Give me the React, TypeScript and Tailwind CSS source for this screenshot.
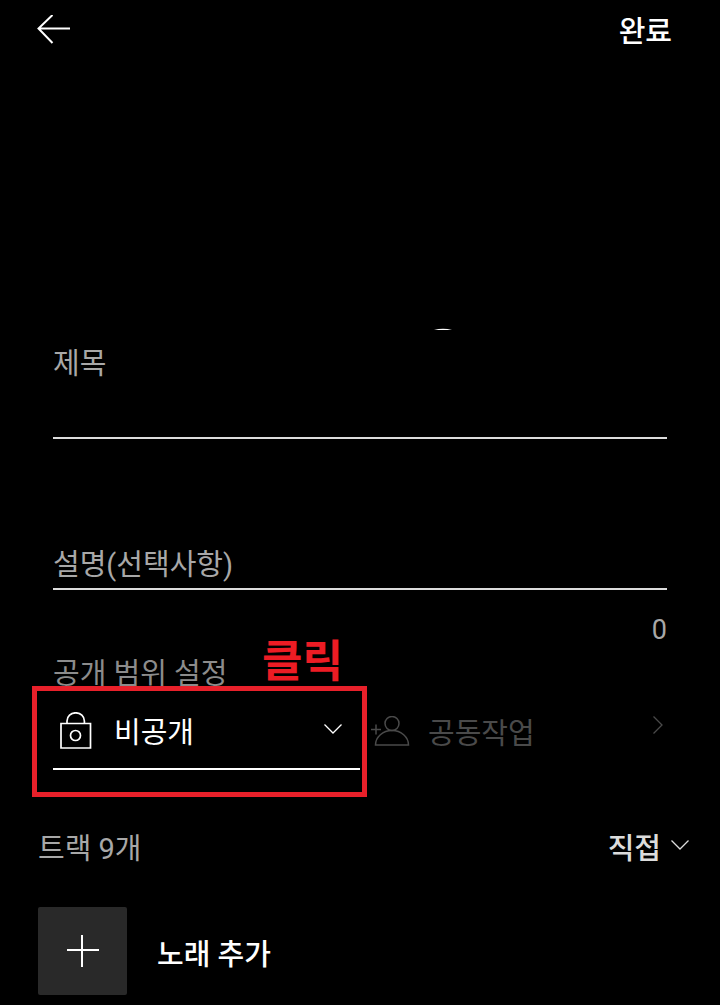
import React, { useState } from "react";

interface IconProps {
  className?: string;
}

const ArrowLeftIcon: React.FC<IconProps> = ({ className }) => (
  <svg width="34" height="30" viewBox="0 0 34 30" fill="none" stroke="currentColor" strokeWidth="2" className={className} aria-hidden="true">
    <path d="M34 13.5H2.5M16.5 0l-14 13.5 14 14.5" />
  </svg>
);

const ChevronDownIcon: React.FC<IconProps> = ({ className }) => (
  <svg width="18" height="10" viewBox="0 0 18 10" fill="none" stroke="currentColor" strokeWidth="1.3" className={className} aria-hidden="true">
    <path d="M.5.5 9 9 17.5.5" />
  </svg>
);

const ChevronRightIcon: React.FC<IconProps> = ({ className }) => (
  <svg width="10" height="18" viewBox="0 0 10 18" fill="none" stroke="currentColor" strokeWidth="1.3" className={className} aria-hidden="true">
    <path d="M.5.5 9 9 .5 17.5" />
  </svg>
);

const LockIcon: React.FC<IconProps> = ({ className }) => (
  <svg width="32" height="38" viewBox="0 0 32 38" fill="none" stroke="currentColor" strokeWidth="1.7" className={className} aria-hidden="true">
    <path d="M1 11.5h29.5V36H1zM7 11.5V9a8.7 8.2 0 0 1 17.4 0v2.5" />
    <circle cx="15.5" cy="23.5" r="5" />
  </svg>
);

const AddPersonIcon: React.FC<IconProps> = ({ className }) => (
  <svg width="39" height="32" viewBox="0 0 39 32" fill="none" stroke="currentColor" strokeWidth="1.5" className={className} aria-hidden="true">
    <circle cx="21" cy="7.5" r="7" />
    <path d="M4.5 29a16.5 14.5 0 0 1 33 0zM0 13.5h10M5 8.5v10" />
  </svg>
);

const PlusIcon: React.FC<IconProps> = ({ className }) => (
  <svg width="32" height="32" viewBox="0 0 32 32" fill="none" stroke="currentColor" strokeWidth="2" className={className} aria-hidden="true">
    <path d="M0 15h32M15 0v32" />
  </svg>
);

export default function App() {
  const [title, setTitle] = useState("");
  const [description, setDescription] = useState("");
  const [privacy, setPrivacy] = useState("private");

  return (
    <div className="min-h-screen bg-black pb-[10px] font-[family-name:Roboto,'Noto_Sans_CJK_KR',sans-serif] text-[29px] leading-10 text-white">
      <header className="flex h-15 items-center justify-between pr-12 pl-9">
        <button type="button" aria-label="뒤로" className="cursor-pointer">
          <ArrowLeftIcon />
        </button>
        <button type="button" className="cursor-pointer pt-1 font-medium">
          완료
        </button>
      </header>

      {/* Playlist artwork */}
      <div className="flex h-[270px] items-end pl-[434px]">
        <svg width="18" height="2" viewBox="0 0 18 2" fill="white" aria-hidden="true">
          <path d="M0 2Q9-.6 18 2z" />
        </svg>
      </div>

      <main>
        <div className="px-[53px]">
          <div className="pt-[14px]">
            <label htmlFor="title" className="block text-[#a8a8a8]">
              제목
            </label>
            <input
              id="title"
              type="text"
              value={title}
              onChange={(e) => setTitle(e.target.value)}
              className="block h-[55px] w-full border-b-2 border-[#dcdcdc] bg-transparent outline-none"
            />
          </div>

          <input
            type="text"
            aria-label="설명(선택사항)"
            placeholder="설명(선택사항)"
            value={description}
            onChange={(e) => setDescription(e.target.value)}
            className="mt-[99px] block h-13 w-full border-b-2 border-[#dcdcdc] bg-transparent pt-1 outline-none placeholder:text-[#a8a8a8]"
          />
          <p className="mt-5 text-right text-[27px] text-[#a8a8a8]">{description.length}</p>

          <label htmlFor="privacy" className="block pt-1 text-[#8c8c8c]">
            공개 범위 설정
          </label>
          <div className="flex">
            <div className="relative flex h-19 w-1/2 items-center border-b-2 border-white pr-[18px] pl-[7px]">
              <LockIcon className="shrink-0" />
              <select
                id="privacy"
                value={privacy}
                onChange={(e) => setPrivacy(e.target.value)}
                className="ml-[22px] h-full min-w-0 flex-1 cursor-pointer appearance-none bg-black pt-1 outline-none"
              >
                <option value="private">비공개</option>
                <option value="unlisted">일부 공개</option>
                <option value="public">공개</option>
              </select>
              <ChevronDownIcon className="mb-1 shrink-0" />

              {/* Click hint */}
              <div className="pointer-events-none absolute -top-2 -right-[7px] -bottom-[29px] -left-[21px] border-5 border-[#e8202a]" />
              <span className="pointer-events-none absolute -top-15 left-[209px] text-[44px] leading-14 font-bold whitespace-nowrap text-[#ed1c24]">
                클릭
              </span>
            </div>

            <button
              type="button"
              disabled
              className="flex h-19 w-1/2 items-center pr-1 pl-[11px] text-[#4a4a4a]"
            >
              <AddPersonIcon className="shrink-0" />
              <span className="ml-[18px] flex-1 pt-1 text-left">공동작업</span>
              <ChevronRightIcon className="mb-[14px] shrink-0" />
            </button>
          </div>
        </div>

        <div className="mt-[55px] flex items-center justify-between pr-[31px] pl-[38px]">
          <h2 className="pt-1 text-[#a8a8a8]">트랙 9개</h2>
          <button type="button" className="flex cursor-pointer items-center gap-[10px] font-medium text-[#dcdcdc]">
            <span className="pt-1">직접</span>
            <ChevronDownIcon className="mb-1" />
          </button>
        </div>

        <button type="button" className="mt-[38px] ml-[38px] flex cursor-pointer items-center gap-[30px] font-medium">
          <span className="flex h-22 w-[89px] items-center justify-center rounded-xs bg-[#292929]">
            <PlusIcon />
          </span>
          <span className="pt-2">노래 추가</span>
        </button>
      </main>
    </div>
  );
}
